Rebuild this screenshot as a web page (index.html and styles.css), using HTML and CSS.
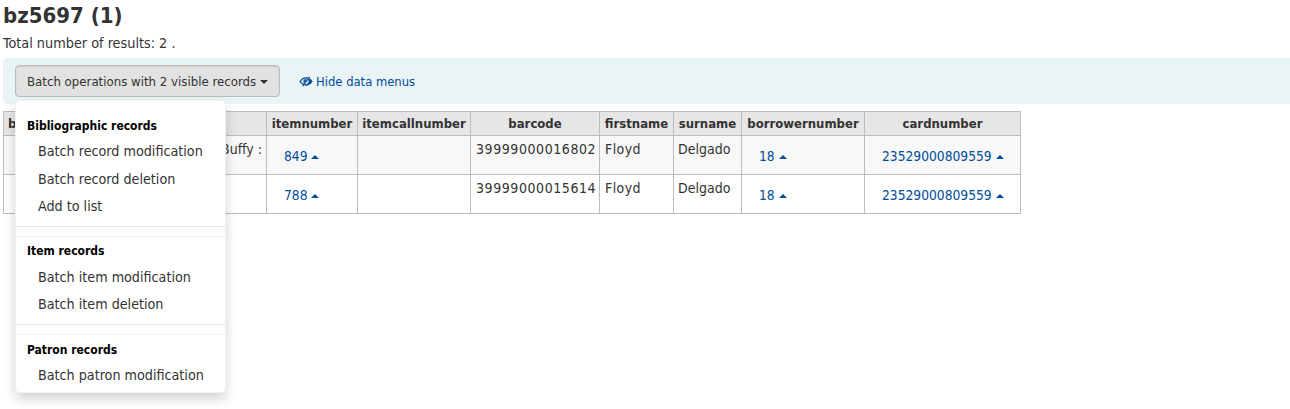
FILE: index.html
```html
<!DOCTYPE html>
<html lang="en">

<head>
    <meta charset="UTF-8" />
    <title>bz5697</title>
    <link rel="stylesheet" href="styles.css">
</head>

<body>
    <h1 class="title">bz5697 (1)</h1>
    <p class="total">Total number of results: 2 .</p>

    <div class="toolbar">
        <button class="batch-btn">Batch operations with 2 visible records <span class="caret"></span></button>
        <a class="hide-link" href="#">
            <svg class="eye" viewBox="0 0 16 12" width="14" height="11">
                <path d="M0.4 6 C2.3 2.9 5 1.2 8 1.2 C8.9 1.2 9.7 1.3 10.4 1.6 L9.4 2.9 C8.9 2.8 8.4 2.7 8 2.7 C5.7 2.7 3.7 3.9 2.2 6 C2.9 7 3.8 7.8 5 8.5 L4 9.7 C2.6 8.8 1.4 7.6 0.4 6 Z" />
                <path d="M5 6 C5 4.3 6.3 3 8 3 L8.6 3 L5.6 7.9 C5.2 7.4 5 6.7 5 6 Z" />
                <path d="M11.8 2.3 C13.3 3.1 14.6 4.4 15.6 6 C13.7 9.1 11 10.8 8 10.8 C7.3 10.8 6.6 10.7 6 10.5 L7.5 8.9 C7.7 9 7.8 9 8 9 C9.7 9 11 7.7 11 6 C11 5.4 10.8 4.8 10.5 4.3 Z" />
                <path d="M11.4 0.2 L12.6 1.1 L4.8 11.6 L3.6 10.7 Z" />
            </svg>
            Hide data menus</a>
    </div>

    <div class="results">
        <table class="report">
            <thead>
                <tr>
                    <th class="col-bib">b</th>
                    <th class="col-title"></th>
                    <th class="col-item">itemnumber</th>
                    <th class="col-call">itemcallnumber</th>
                    <th class="col-barcode">barcode</th>
                    <th class="col-first">firstname</th>
                    <th class="col-sur">surname</th>
                    <th class="col-borrower">borrowernumber</th>
                    <th class="col-card">cardnumber</th>
                </tr>
            </thead>
            <tbody>
                <tr class="odd">
                    <td></td>
                    <td class="title-cell">Buffy :</td>
                    <td><a class="data-link" href="#">849 <span class="up"></span></a></td>
                    <td></td>
                    <td class="barcode-cell">39999000016802</td>
                    <td class="name-cell">Floyd</td>
                    <td class="surname-cell">Delgado</td>
                    <td><a class="data-link" href="#">18 <span class="up"></span></a></td>
                    <td><a class="data-link" href="#">23529000809559 <span class="up"></span></a></td>
                </tr>
                <tr>
                    <td></td>
                    <td class="title-cell"></td>
                    <td><a class="data-link" href="#">788 <span class="up"></span></a></td>
                    <td></td>
                    <td class="barcode-cell">39999000015614</td>
                    <td class="name-cell">Floyd</td>
                    <td class="surname-cell">Delgado</td>
                    <td><a class="data-link" href="#">18 <span class="up"></span></a></td>
                    <td><a class="data-link" href="#">23529000809559 <span class="up"></span></a></td>
                </tr>
            </tbody>
        </table>

        <ul class="menu">
            <li class="menu-header">Bibliographic records</li>
            <li class="menu-item">Batch record modification</li>
            <li class="menu-item">Batch record deletion</li>
            <li class="menu-item">Add to list</li>
            <li class="divider"></li>
            <li class="menu-header item-header">Item records</li>
            <li class="menu-item">Batch item modification</li>
            <li class="menu-item">Batch item deletion</li>
            <li class="divider patron-divider"></li>
            <li class="menu-header">Patron records</li>
            <li class="menu-item">Batch patron modification</li>
        </ul>
    </div>
</body>

</html>
```
FILE: styles.css
```css
html,
body {
    overflow: hidden;
}

body {
    margin: 0;
    padding: 0 0 0 3px;
    height: 409px;
    box-sizing: border-box;
    font-family: "DejaVu Sans Condensed", "DejaVu Sans", sans-serif;
    font-stretch: condensed;
    font-size: 14px;
    color: #333;
    background-color: #fff;
}

.title {
    margin: 0;
    padding-top: 1px;
    font-size: 22px;
    line-height: 30px;
    font-weight: 700;
    color: #333;
}

.total {
    margin: 4px 0 0;
    font-size: 14.3px;
    line-height: 16px;
}

.toolbar {
    display: flex;
    align-items: center;
    width: 1320px;
    height: 46px;
    margin-top: 7px;
    padding-left: 12px;
    box-sizing: border-box;
    background-color: #eaf3f5;
    border-radius: 5px 0 0 5px;
}

.batch-btn {
    width: 265px;
    height: 32px;
    padding: 0 0 0 11px;
    text-align: left;
    font-family: inherit;
    font-stretch: inherit;
    font-size: 13.1px;
    color: #333;
    background-color: #e2e2e2;
    border: 1px solid #bbb;
    border-radius: 4px;
    box-shadow: inset 0 1px 2px rgba(0, 0, 0, 0.1);
}

.caret {
    display: inline-block;
    vertical-align: middle;
    border-top: 4px solid #333;
    border-left: 4px solid transparent;
    border-right: 4px solid transparent;
}

.hide-link {
    display: flex;
    align-items: center;
    gap: 3px;
    margin-left: 19px;
    font-size: 12.9px;
    color: #004d99;
    text-decoration: none;
}

.eye {
    fill: #004d99;
}

.results {
    position: relative;
    margin-top: 7px;
}

.report {
    border-collapse: collapse;
    table-layout: fixed;
    width: 1018px;
    font-size: 14px;
}

.report th,
.report td {
    box-sizing: border-box;
    border: 1px solid #bcbcbc;
    padding: 5px 5px 3px;
    vertical-align: top;
    line-height: 17px;
}

.report th {
    height: 24px;
    padding: 3px 4px;
    background-color: #e6e6e6;
    font-size: 13px;
    font-weight: 700;
    text-align: center;
    white-space: nowrap;
}

.report td {
    height: 39px;
}

.report .odd td {
    background-color: #f8f8f8;
}

.barcode-cell {
    letter-spacing: 0.57px;
}

.name-cell {
    letter-spacing: 0.4px;
}

.report .surname-cell {
    padding-left: 4px;
}

.report .title-cell {
    padding-right: 4px;
    text-align: right;
}

.report .col-bib {
    width: 60px;
    text-align: left;
}

.col-title {
    width: 203px;
}

.col-item {
    width: 91px;
}

.col-call {
    width: 113px;
}

.col-barcode {
    width: 129px;
}

.col-first {
    width: 74px;
}

.col-sur {
    width: 68px;
}

.col-borrower {
    width: 123px;
}

.col-card {
    width: 156px;
}

.data-link {
    display: block;
    margin: 7px 0 0 12px;
    font-size: 13.7px;
    color: #004d99;
    white-space: nowrap;
    text-decoration: none;
}

.up {
    display: inline-block;
    vertical-align: middle;
    border-bottom: 4px solid #004d99;
    border-left: 4px solid transparent;
    border-right: 4px solid transparent;
}

.menu {
    position: absolute;
    top: -11px;
    left: 12px;
    width: 211px;
    height: 293px;
    margin: 0;
    padding: 15px 0 0;
    box-sizing: border-box;
    list-style: none;
    background-color: #fff;
    border: 1px solid rgba(0, 0, 0, 0.05);
    border-radius: 5px;
    box-shadow: 0 6px 12px rgba(0, 0, 0, 0.175);
}

.menu-header {
    margin-bottom: 2px;
    padding: 0 11px;
    font-size: 12px;
    line-height: 20px;
    font-weight: 700;
    color: #000;
}

.item-header {
    margin-bottom: 3px;
}

.menu-item {
    padding: 0 22px;
    font-size: 14.2px;
    line-height: 27.5px;
    white-space: nowrap;
}

.divider {
    height: 11px;
    box-sizing: border-box;
    margin: 5px 0 4px;
    border-top: 1px solid #e5e5e5;
    border-bottom: 1px solid #f2f2f2;
}

.patron-divider {
    margin-bottom: 5px;
}
```
